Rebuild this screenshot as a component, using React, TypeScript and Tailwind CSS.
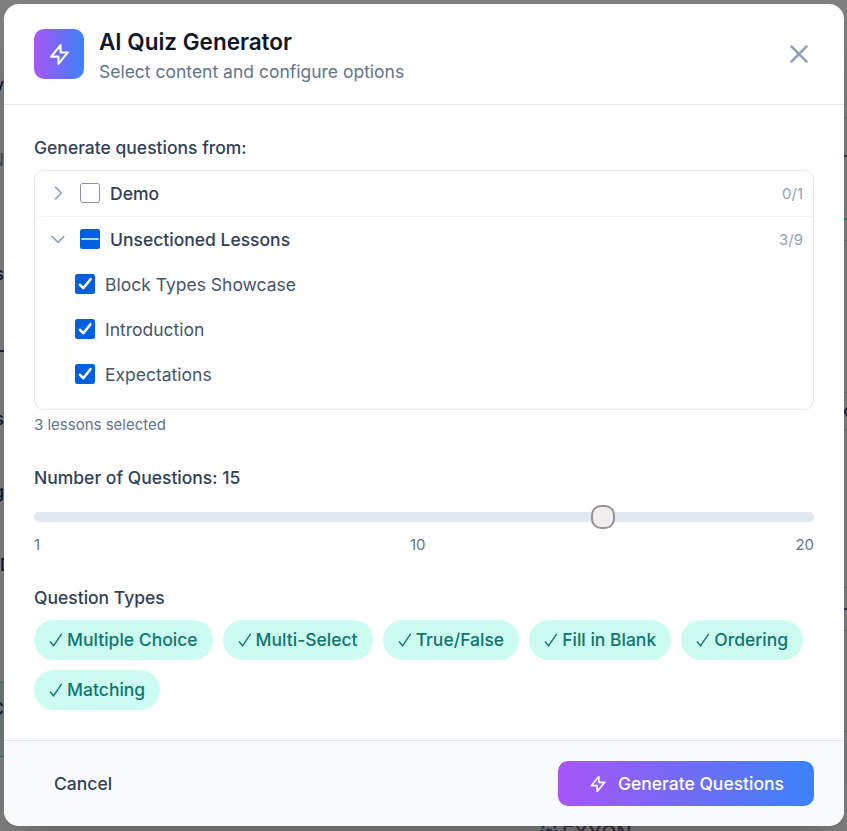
import { useState } from "react";
import clsx from "clsx";

const lessons = ["Block Types Showcase", "Introduction", "Expectations"];

const questionTypes = [
  "Multiple Choice",
  "Multi-Select",
  "True/False",
  "Fill in Blank",
  "Ordering",
  "Matching",
];

function BoltIcon({ className }: { className?: string }) {
  return (
    <svg className={className} viewBox="0 0 24 24" fill="none" stroke="currentColor" strokeWidth={2} strokeLinecap="round" strokeLinejoin="round">
      <path d="M13 10V3L4 14h7v7l9-11h-7z" />
    </svg>
  );
}

function Chevron({ open }: { open?: boolean }) {
  return (
    <svg className="mb-px size-5 shrink-0 text-slate-400" viewBox="0 0 24 24" fill="none" stroke="currentColor" strokeWidth={2} strokeLinecap="round" strokeLinejoin="round">
      <path d={open ? "M19 9l-7 7-7-7" : "M9 5l7 7-7 7"} />
    </svg>
  );
}

type CheckState = "off" | "on" | "mixed";

function Checkbox({ state }: { state: CheckState }) {
  return (
    <span
      role="checkbox"
      aria-checked={state === "mixed" ? "mixed" : state === "on"}
      className={clsx(
        "mb-px block size-5 shrink-0 rounded-[2.5px]",
        state === "off" ? "border border-[#8f8f9d] bg-white" : "bg-[#0060df]"
      )}
    >
      {state === "on" && (
        <svg viewBox="0 0 20 20" fill="none" stroke="white" strokeWidth={2.6} strokeLinecap="round" strokeLinejoin="round">
          <path d="M5 10.8L8.3 14.2L15.5 5.2" />
        </svg>
      )}
      {state === "mixed" && (
        <svg viewBox="0 0 20 20" fill="none" stroke="#b9d6f8" strokeWidth={2} strokeLinecap="round">
          <path d="M2 10H18" />
        </svg>
      )}
    </span>
  );
}

function SectionRow({ title, count, state, open }: { title: string; count: string; state: CheckState; open?: boolean }) {
  return (
    <div className="flex h-[45px] items-center pr-2.5 pl-[13px]">
      <Chevron open={open} />
      <span className="ml-3">
        <Checkbox state={state} />
      </span>
      <span className="ml-2.5 flex-1 font-medium text-slate-700">{title}</span>
      <span className="text-[15px] text-slate-400">{count}</span>
    </div>
  );
}

function PageBehind() {
  return (
    <div className="flex h-full overflow-hidden bg-[#808080] text-[17px] leading-5 font-medium text-[#10182f]">
      <div className="flex w-1 flex-col items-end overflow-hidden">
        <span className="mt-[75px] h-5">y</span>
        <span className="mt-[55px] h-5 font-normal text-[#43464f]">N</span>
        <span className="mt-[94px] h-5">s</span>
        <span className="mt-[66px] h-0.5 w-full bg-[#1c2740]" />
        <span className="mt-[57px] h-5">s</span>
        <span className="mt-[53px] h-5">g</span>
        <span className="mt-[53px] h-5 w-1">D</span>
        <span className="mt-[107px] h-px w-full bg-[#1c7b70]" />
        <span className="flex h-[73px] w-full justify-end bg-[#6f7b79] pt-4">C</span>
        <span className="h-px w-full bg-[#1c7b70]" />
      </div>
      <div className="flex flex-1 items-end pl-[536px]">
        <div className="flex h-[7px] items-start gap-1 overflow-hidden">
          <svg className="h-5 w-[18px] shrink-0" viewBox="0 0 18 20" fill="#26384c">
            <circle cx="9" cy="9" r="4.5" />
            <circle cx="3" cy="3" r="1.5" />
            <circle cx="15" cy="3" r="1.5" />
            <circle cx="1.5" cy="7" r="1.5" />
            <circle cx="16.5" cy="7" r="1.5" />
          </svg>
          <span className="text-xl leading-[18px] font-medium text-[#3d2d38]">EXYON</span>
        </div>
      </div>
      <div className="flex w-[3px] flex-col overflow-hidden">
        <span className="mt-[117px] h-px bg-[#6c6f70]" />
        <span className="mt-[37px] h-0.5 bg-[#27364f]" />
        <span className="mt-[61px] h-0.5 bg-[#16806f]" />
        <span className="mt-5 h-px bg-[#6c6f70]" />
        <span className="mt-[151px] h-px bg-[#6c6f70]" />
        <span className="mt-2 -ml-1 h-5">k</span>
        <span className="mt-2 h-px bg-[#6c6f70]" />
        <span className="mt-[157px] h-px bg-[#6c6f70]" />
        <span className="mt-5 h-0.5 bg-[#27364f]" />
        <span className="mt-5 h-px bg-[#6c6f70]" />
        <span className="mt-[100px] h-px bg-[#6c6f70]" />
      </div>
    </div>
  );
}

export default function App() {
  const [selected] = useState<string[]>(questionTypes);
  const [amount] = useState(15);

  return (
    <div className="relative h-[831px] w-[847px] overflow-hidden font-['Inter',sans-serif] text-[17.5px] leading-[25px]">
      <PageBehind />

      <div className="absolute inset-0 flex items-start py-1 pr-[3px] pl-1">
        <div className="flex w-full flex-col overflow-hidden rounded-[15px] bg-white shadow-2xl">
          <header className="flex items-center border-b border-slate-200 px-[30px] py-5">
            <div className="flex size-[50px] items-center justify-center rounded-[10px] bg-linear-to-r/srgb from-[#a855f7] to-[#3b82f6] text-white">
              <BoltIcon className="size-[25px]" />
            </div>
            <div className="ml-[15px] flex-1">
              <h2 className="text-[22.5px] leading-[35px] font-semibold text-slate-900">AI Quiz Generator</h2>
              <p className="text-slate-500">Select content and configure options</p>
            </div>
            <button aria-label="Close" className="text-slate-400">
              <svg className="size-[30px]" viewBox="0 0 24 24" fill="none" stroke="currentColor" strokeWidth={2} strokeLinecap="round">
                <path d="M6 18L18 6M6 6l12 12" />
              </svg>
            </button>
          </header>

          <main className="flex flex-col gap-[30px] p-[30px]">
            <section>
              <h3 className="mb-2.5 font-medium text-slate-700">Generate questions from:</h3>
              <div className="h-[240px] overflow-hidden rounded-[10px] border border-slate-200">
                <div className="border-b border-slate-100">
                  <SectionRow title="Demo" count="0/1" state="off" />
                </div>
                <SectionRow title="Unsectioned Lessons" count="3/9" state="mixed" open />
                {lessons.map((lesson) => (
                  <div key={lesson} className="flex h-[45px] items-center gap-2.5 pl-10 text-slate-600">
                    <Checkbox state="on" />
                    <span>{lesson}</span>
                  </div>
                ))}
              </div>
              <p className="mt-[5px] text-[15px] leading-5 text-slate-500">{lessons.length} lessons selected</p>
            </section>

            <section>
              <h3 className="font-medium text-slate-700">Number of Questions: {amount}</h3>
              <input
                type="range"
                min={1}
                max={20}
                value={amount}
                readOnly
                className="mt-[22px] block h-2.5 w-full appearance-none rounded-full bg-slate-200 [&::-webkit-slider-thumb]:size-6 [&::-webkit-slider-thumb]:appearance-none [&::-webkit-slider-thumb]:rounded-[10px] [&::-webkit-slider-thumb]:border-2 [&::-webkit-slider-thumb]:border-[#998f94] [&::-webkit-slider-thumb]:bg-[#f0eeef]"
              />
              <div className="mt-[13px] flex justify-between text-[15px] leading-5 text-slate-500">
                <span>1</span>
                <span>10</span>
                <span>20</span>
              </div>
            </section>

            <section>
              <h3 className="mb-2.5 font-medium text-slate-700">Question Types</h3>
              <div className="flex flex-wrap gap-2.5">
                {selected.map((type) => (
                  <button
                    key={type}
                    className="flex h-10 items-center rounded-full bg-[#ccfbf1] px-[15px] pb-px font-medium text-[#0f766e]"
                  >
                    <svg className="h-5 w-[18.1px]" viewBox="0 0 18 20" fill="none" stroke="currentColor" strokeWidth={1.4}>
                      <path d="M1 11.5L4.5 15.8L12.6 3.8" />
                    </svg>
                    {type}
                  </button>
                ))}
              </div>
            </section>
          </main>

          <footer className="flex items-center justify-between border-t border-slate-200 bg-slate-50 px-[30px] py-5">
            <button className="px-5 font-medium text-slate-700">Cancel</button>
            <button className="flex h-[45px] items-center gap-2.5 rounded-[10px] bg-linear-to-r/srgb from-[#a855f7] to-[#3b82f6] px-[30px] font-medium text-white">
              <BoltIcon className="size-5" />
              Generate Questions
            </button>
          </footer>
        </div>
      </div>
    </div>
  );
}
